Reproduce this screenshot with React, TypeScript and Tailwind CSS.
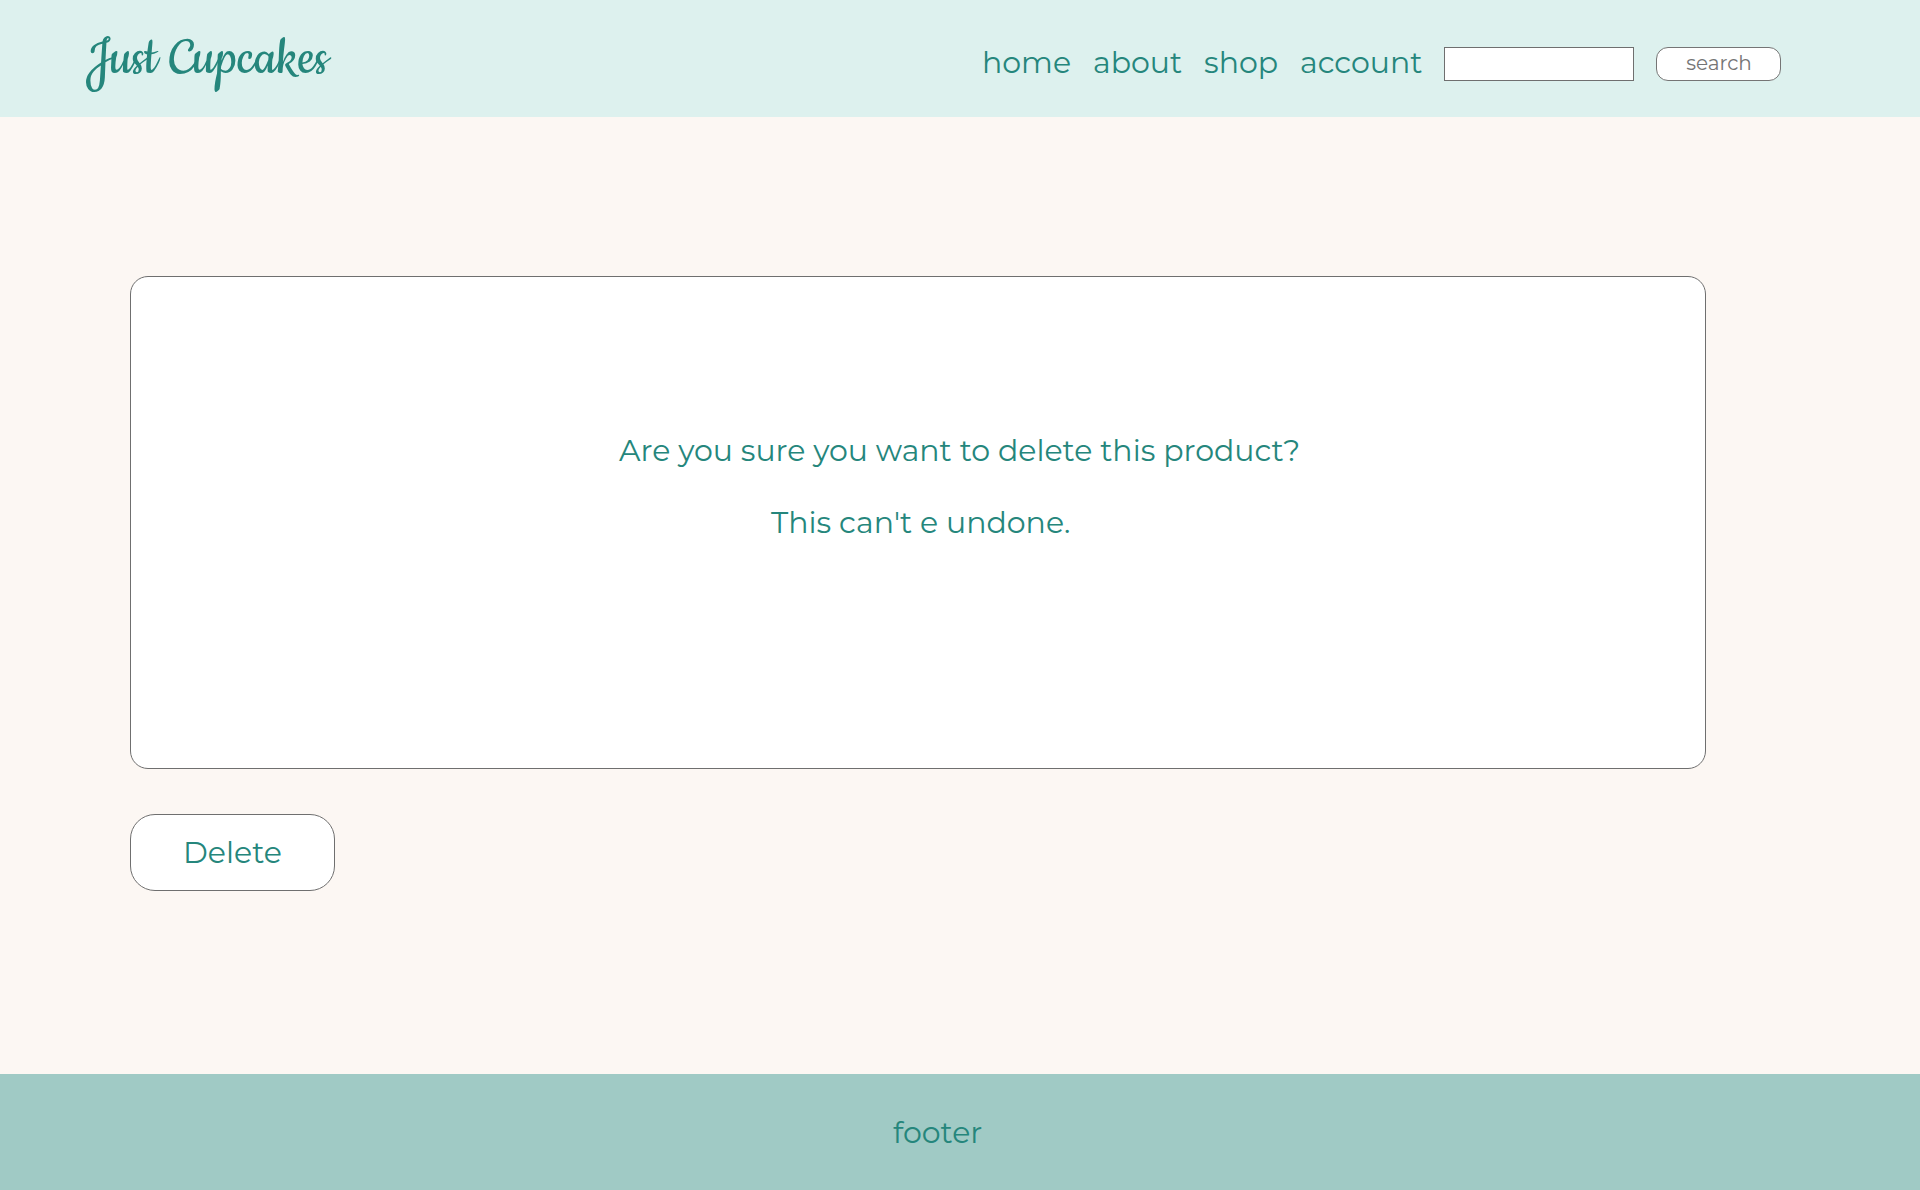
const links = [
  { label: 'home', box: 'w-[89px]' },
  { label: 'about', box: 'w-[89px]' },
  { label: 'shop', box: 'w-[74px]' },
  { label: 'account', box: 'w-[122px]' },
];

function Header() {
  return (
    <header className="flex h-[117px] items-start bg-[#ddf1ee] text-[#25867c]">
      <a
        href="#"
        className="ml-[86px] mt-[23px] whitespace-nowrap font-['Cookie','Liberation_Serif',cursive] text-[60px] leading-[72px]"
      >
        Just Cupcakes
      </a>
      <nav className="ml-auto mr-[139px] mt-[47px] flex h-[34px] gap-[22px]">
        {links.map((l) => (
          <a key={l.label} href="#" className={`${l.box} whitespace-nowrap leading-[31px]`}>
            {l.label}
          </a>
        ))}
        <input aria-label="Search" className="h-[34px] w-[190px] border border-[#6f6f6f] bg-white px-2 text-base outline-none" />
        <button className="h-[34px] w-[125px] rounded-[12px] border border-[#757575] bg-white pb-[3px] pl-px text-[20px] leading-[30px] text-[#757575]">
          search
        </button>
      </nav>
    </header>
  );
}

export default function App() {
  return (
    <div className="flex h-[1190px] w-[1920px] flex-col bg-[#fcf7f3] font-['Montserrat','Inter',sans-serif] text-[30px] text-[#25867c]">
      <Header />
      <main className="flex flex-1 flex-col items-start pl-[130px] pt-[159px]">
        <section className="h-[493px] w-[1576px] rounded-[18px] border border-[#6f6f6f] bg-white pt-[156px] leading-[36px]">
          <p className="ml-[488px] whitespace-nowrap">Are you sure you want to delete this product?</p>
          <p className="ml-[640px] mt-9 whitespace-nowrap">This can't e undone.</p>
        </section>
        <button className="mt-[45px] h-[77px] w-[205px] rounded-[25px] border border-[#6f6f6f] bg-white leading-[36px]">
          Delete
        </button>
      </main>
      <footer className="h-[116px] bg-[#a0cac5] pl-[893px] pt-[41px] leading-[36px]">footer</footer>
    </div>
  );
}
